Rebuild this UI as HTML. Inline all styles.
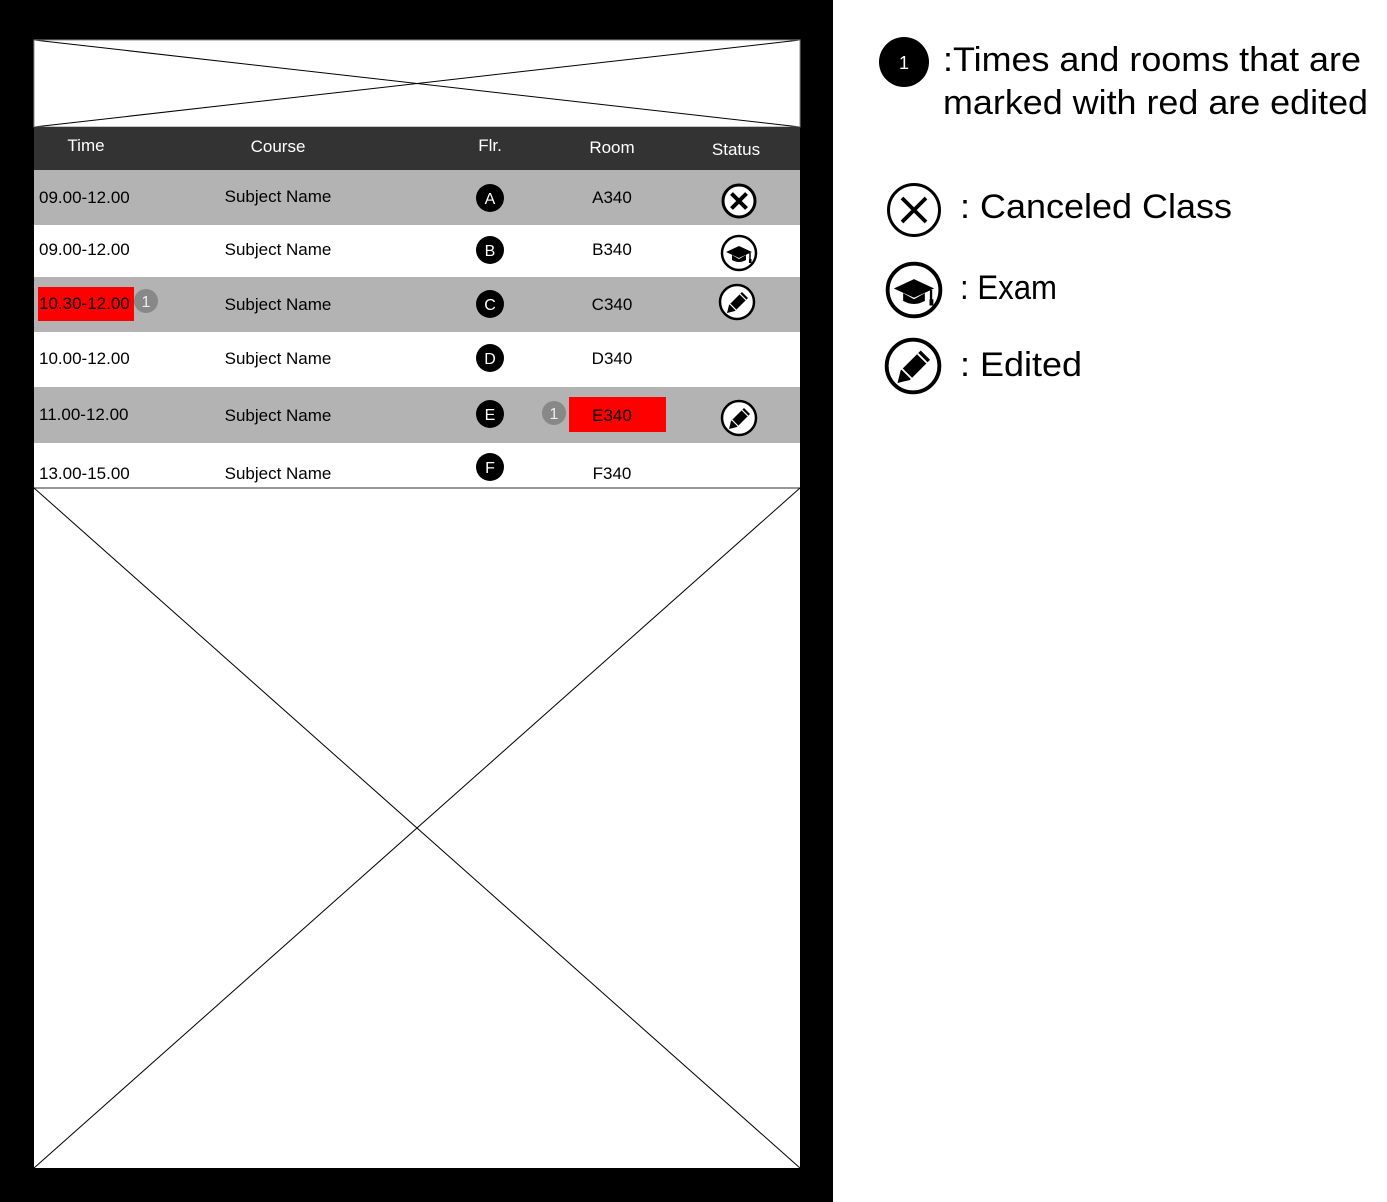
<!DOCTYPE html>
<html><head><meta charset="utf-8"><style>
html,body{margin:0;padding:0;background:#fff;width:1387px;height:1202px;overflow:hidden}
svg{display:block}
text{font-family:"Liberation Sans",Arial,sans-serif}
</style></head><body>
<svg width="1387" height="1202" viewBox="0 0 1387 1202" xmlns="http://www.w3.org/2000/svg">
<defs>
<symbol id="xic" viewBox="-20 -20 40 40">
<circle r="17" fill="#fff" stroke="#000" stroke-width="2"/>
<path d="M-8 -8L8 8M8 -8L-8 8" stroke="#000" stroke-width="2.5"/>
</symbol>
<symbol id="xicb" viewBox="-20 -20 40 40">
<circle r="16" fill="#fff" stroke="#000" stroke-width="3"/>
<path d="M-7.5 -7.5L7.5 7.5M7.5 -7.5L-7.5 7.5" stroke="#000" stroke-width="4"/>
</symbol>
<symbol id="cap" viewBox="-20 -20 40 40">
<circle r="17" fill="#fff" stroke="#000" stroke-width="2.5"/>
<path d="M-13 -1L0 -7L13 -1L0 5Z" fill="#000"/>
<path d="M-7 2L-7 7Q0 11 7 7L7 2L0 6Z" fill="#000"/>
<path d="M11 0L11 7" stroke="#000" stroke-width="1.5"/>
<rect x="10" y="6" width="2.5" height="4" fill="#000"/>
</symbol>
<symbol id="pen" viewBox="-20 -20 40 40">
<circle r="17" fill="#fff" stroke="#000" stroke-width="2.5"/>
<path d="M-10 11L-8 3L5 -10L11 -4L-2 9Z" fill="#000"/>
<path d="M-7 2L2 11" stroke="#fff" stroke-width="1.2"/>
<path d="M3 -8L9 -2" stroke="#fff" stroke-width="1.2"/>
</symbol>
</defs>
<rect x="0" y="0" width="833" height="1202" fill="#000"/>
<rect x="34" y="40" width="766" height="1128" fill="#fff"/>
<path d="M34 40L800 127M800 40L34 127" stroke="#000" stroke-width="1"/>
<rect x="34" y="40" width="766" height="87" fill="none" stroke="#888" stroke-width="1"/>
<rect x="34" y="127" width="766" height="43" fill="#333"/>
<g fill="#fff" font-size="17" text-anchor="middle">
<text x="86" y="151">Time</text>
<text x="278" y="152">Course</text>
<text x="490" y="151">Flr.</text>
<text x="612" y="153">Room</text>
<text x="736" y="155">Status</text>
</g>
<rect x="34" y="170" width="766" height="55" fill="#b3b3b3"/>
<rect x="34" y="277" width="766" height="55" fill="#b3b3b3"/>
<rect x="34" y="387" width="766" height="56" fill="#b3b3b3"/>
<rect x="38" y="287" width="96" height="34" fill="#f00"/>
<rect x="569" y="397" width="97" height="35" fill="#f00"/>
<g font-size="17" fill="#000">
<text x="39" y="203">09.00-12.00</text>
<text x="39" y="255">09.00-12.00</text>
<text x="39" y="309">10.30-12.00</text>
<text x="39" y="364">10.00-12.00</text>
<text x="39" y="420">11.00-12.00</text>
<text x="39" y="479">13.00-15.00</text>
</g>
<g font-size="17" fill="#000" text-anchor="middle">
<text x="278" y="202">Subject Name</text>
<text x="278" y="255">Subject Name</text>
<text x="278" y="310">Subject Name</text>
<text x="278" y="364">Subject Name</text>
<text x="278" y="421">Subject Name</text>
<text x="278" y="479">Subject Name</text>
<text x="612" y="203">A340</text>
<text x="612" y="255">B340</text>
<text x="612" y="310">C340</text>
<text x="612" y="364">D340</text>
<text x="612" y="421">E340</text>
<text x="612" y="479">F340</text>
</g>
<g fill="#000">
<circle cx="490" cy="198" r="14"/><circle cx="490" cy="250" r="14"/>
<circle cx="490" cy="304" r="14"/><circle cx="490" cy="358" r="14"/>
<circle cx="490" cy="414" r="14"/><circle cx="490" cy="467" r="14"/>
</g>
<g fill="#fff" font-size="16" text-anchor="middle">
<text x="490" y="204">A</text><text x="490" y="256">B</text>
<text x="490" y="310">C</text><text x="490" y="364">D</text>
<text x="490" y="420">E</text><text x="490" y="473">F</text>
</g>
<circle cx="146" cy="301" r="12" fill="#888"/>
<circle cx="554" cy="413" r="12" fill="#888"/>
<g fill="#eee" font-size="16" text-anchor="middle">
<text x="146" y="307">1</text><text x="554" y="419">1</text>
</g>
<use href="#xicb" x="719" y="181" width="40" height="40"/>
<use href="#cap" x="719" y="233" width="40" height="40"/>
<use href="#pen" x="717" y="282" width="40" height="40"/>
<use href="#pen" x="719" y="398" width="40" height="40"/>
<line x1="34" y1="488" x2="800" y2="488" stroke="#777" stroke-width="1.5"/>
<path d="M34 488L800 1168M800 488L34 1168" stroke="#000" stroke-width="1"/>
<circle cx="904" cy="62" r="25" fill="#000"/>
<text x="904" y="69" fill="#fff" font-size="18" text-anchor="middle">1</text>
<g font-size="34" fill="#000">
<text x="943" y="71" textLength="418" lengthAdjust="spacingAndGlyphs">:Times and rooms that are</text>
<text x="943" y="114" textLength="425" lengthAdjust="spacingAndGlyphs">marked with red are edited</text>
<text x="960" y="218" textLength="272" lengthAdjust="spacingAndGlyphs">: Canceled Class</text>
<text x="960" y="299" textLength="97" lengthAdjust="spacingAndGlyphs">: Exam</text>
<text x="960" y="376" textLength="122" lengthAdjust="spacingAndGlyphs">: Edited</text>
</g>
<use href="#xic" x="884" y="180" width="60" height="60"/>
<use href="#cap" x="883" y="259" width="62" height="62"/>
<use href="#pen" x="882" y="335" width="62" height="62"/>
</svg>
</body></html>
